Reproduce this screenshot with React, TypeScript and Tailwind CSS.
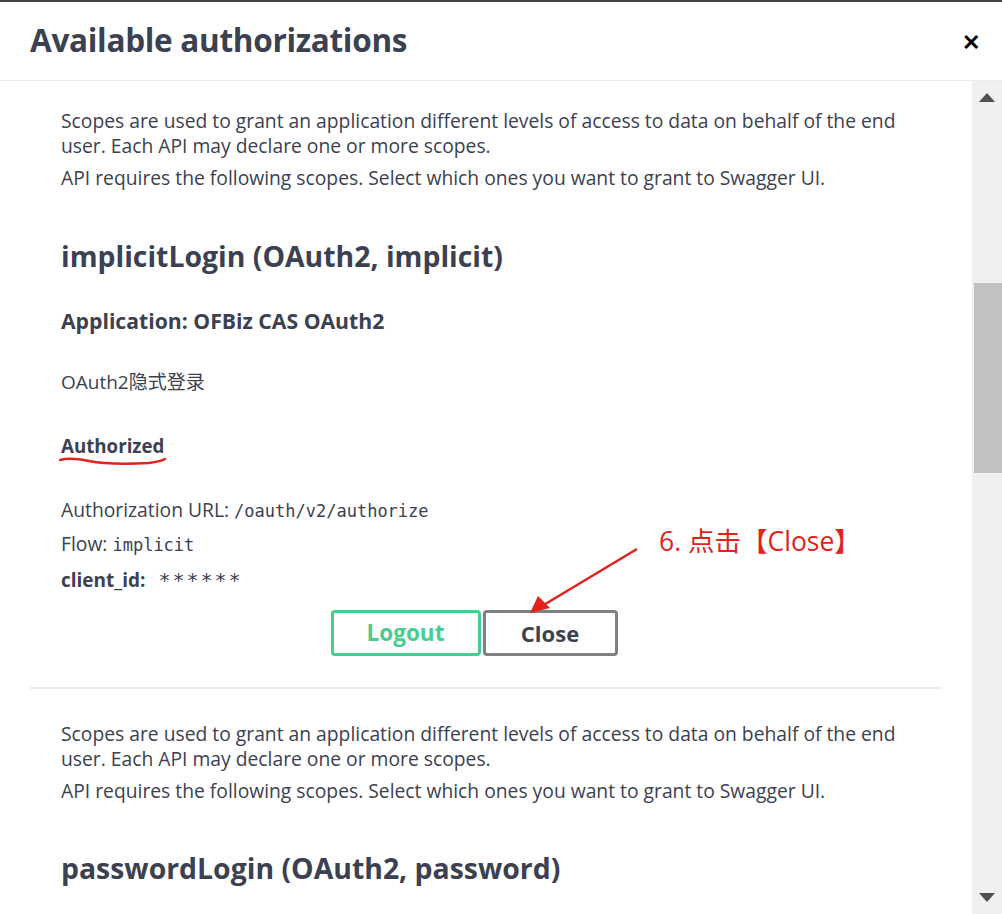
import React from "react";

const font = { fontFamily: '"Open Sans", "Noto Sans CJK SC", sans-serif' };
const mono = { fontFamily: '"DejaVu Sans Mono", monospace' };

function Scopes() {
  return (
    <div className="text-[19.3px] leading-[25px]">
      <p>Scopes are used to grant an application different levels of access to data on behalf of the end user. Each API may declare one or more scopes.</p>
      <p className="mt-[7px]">API requires the following scopes. Select which ones you want to grant to Swagger UI.</p>
    </div>
  );
}

export default function App() {
  return (
    <div className="w-[1002px] h-[914px] bg-white text-[#3b4151] overflow-hidden flex flex-col" style={font}>
      <div className="h-[2px] bg-[#444]" />
      <div className="h-[79px] flex items-center justify-between pl-[30px] pr-[20px] border-b border-[#ebebeb]">
        <h1 className="text-[31.5px] font-bold leading-none tracking-[-0.3px] pb-[2px]">Available authorizations</h1>
        <span className="text-black text-[22px] font-bold leading-none pr-[2px]">✕</span>
      </div>
      <div className="flex flex-1 min-h-0">
        <div className="flex-1 min-w-0 px-[30px] relative">
          <div className="pl-[31px] pr-[40px] pt-[27px]">
            <Scopes />
            <h2 className="mt-[49px] text-[28.4px] font-bold leading-[34px]">implicitLogin (OAuth2, implicit)</h2>
            <h3 className="mt-[35px] text-[21.2px] font-bold leading-[26px]">Application: OFBiz CAS OAuth2</h3>
            <p className="mt-[35px] text-[19px] leading-[26px]">OAuth2隐式登录</p>
            <h4 className="mt-[38px] text-[18.7px] font-bold leading-[26px] relative inline-block">
              Authorized
              <svg className="absolute left-[-2px] top-[24px]" width="108" height="10" viewBox="0 0 108 10">
                <path d="M1 3 C 8 1, 20 2, 30 4 C 45 7, 70 7, 90 6 C 98 5, 103 4, 106 2" stroke="#e0231c" strokeWidth="2.5" fill="none" strokeLinecap="round" />
              </svg>
            </h4>
            <div className="mt-[38px] text-[19.3px] leading-[26px]">
              Authorization URL: <code className="text-[17px]" style={mono}>/oauth/v2/authorize</code>
            </div>
            <div className="mt-[7px] text-[19.3px] leading-[26px]">
              Flow: <code className="text-[17px]" style={mono}>implicit</code>
            </div>
            <div className="mt-[9px] text-[19px] leading-[26px] flex items-center">
              <span className="font-bold">client_id:</span>
              <span className="ml-[13px] text-[20px] tracking-[2px]" style={mono}>******</span>
            </div>
            <div className="mt-[17px] flex justify-center gap-[2px] pr-[15px]">
              <button className="w-[150px] h-[46px] border-[3px] border-[#49cc90] rounded-[4px] text-[#49cc90] text-[22.5px] font-bold">Logout</button>
              <button className="w-[135px] h-[46px] border-[3px] border-[#808080] rounded-[4px] text-[#3b4151] text-[22px] font-bold">Close</button>
            </div>
          </div>
          <div className="mt-[31px] border-t-[2px] border-[#ebebeb]" />
          <div className="pl-[31px] pr-[40px] pt-[32px]">
            <Scopes />
            <h2 className="mt-[48px] text-[28.4px] font-bold leading-[34px]">passwordLogin (OAuth2, password)</h2>
          </div>
          <div className="absolute left-[659px] top-[443px] text-[#e0231c] text-[26.5px] leading-[34px] whitespace-nowrap">6. 点击【Close】</div>
          <svg className="absolute left-[520px] top-[463px]" width="130" height="75" viewBox="0 0 130 75">
            <path d="M117 5 L 22 62" stroke="#e0231c" strokeWidth="2.5" fill="none" />
            <path d="M10 69 L 18 52 L 30 64 Z" fill="#e0231c" />
          </svg>
        </div>
        <div className="w-[30px] bg-[#f0f0f0] flex flex-col items-center relative">
          <svg className="mt-[12px]" width="16" height="9" viewBox="0 0 16 9"><path d="M0 9 L8 0 L16 9 Z" fill="#505050" /></svg>
          <div className="mt-[181px] w-[28px] self-end h-[190px] bg-[#c1c1c1]" />
          <div className="flex-1" />
          <svg className="mb-[12px]" width="16" height="9" viewBox="0 0 16 9"><path d="M0 0 L8 9 L16 0 Z" fill="#505050" /></svg>
        </div>
      </div>
    </div>
  );
}
